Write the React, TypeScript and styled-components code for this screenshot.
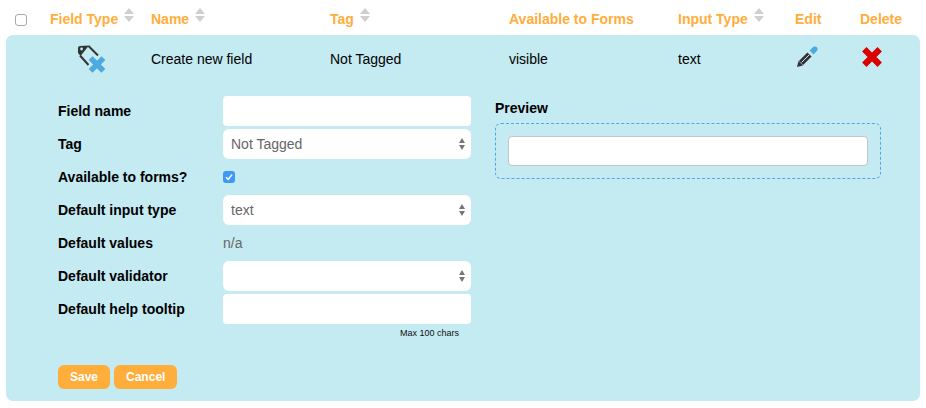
import { createGlobalStyle, styled } from "styled-components";

const GlobalStyle = createGlobalStyle`
  html, body {
    margin: 0;
    padding: 0;
    background: #fff;
  }
  body {
    font-family: "Liberation Sans", Arial, sans-serif;
    font-size: 14px;
    color: #000;
  }
`;

const COLUMNS = "44px 101px 179px 179px 169px 117px 65px 1fr";

const Page = styled.div`
  width: 926px;
  height: 408px;
  padding: 0 6px;
  box-sizing: border-box;
  overflow: hidden;
`;

const HeaderRow = styled.div`
  display: grid;
  grid-template-columns: ${COLUMNS};
  height: 35px;
  padding-top: 3px;
  box-sizing: border-box;
  align-items: center;
`;

const HeaderCell = styled.div`
  display: flex;
  align-items: center;
  gap: 6px;
  color: #ffad3b;
  font-weight: 700;
  font-size: 14px;
`;

const SortIcon = styled.svg`
  width: 10px;
  height: 14px;
  margin-top: -8px;
  fill: #cfcfcf;
`;

const Box = styled.div<{ $checked?: boolean }>`
  width: 12px;
  height: 12px;
  box-sizing: border-box;
  border-radius: 3px;
  display: flex;
  align-items: center;
  justify-content: center;
  background: ${(props) => (props.$checked ? "#3f97f8" : "#fff")};
  border: ${(props) => (props.$checked ? "none" : "1px solid #a9a9a9")};
`;

const HeaderBox = styled(Box)`
  margin: 2px 0 0 9px;
`;

const Panel = styled.section`
  height: 366px;
  background: #c4eaf2;
  border-radius: 7px;
`;

const FieldRow = styled.div`
  display: grid;
  grid-template-columns: ${COLUMNS};
  height: 46px;
  align-items: center;
  padding-top: 1px;
  box-sizing: border-box;
`;

const TagGraphic = styled.svg`
  width: 28px;
  height: 28px;
  margin: 0 0 0 28px;
  display: block;
`;

const CellIcon = styled.svg`
  width: 22px;
  height: 22px;
  display: block;
  margin: -4px 0 0 1px;
`;

const FormArea = styled.div`
  display: flex;
  gap: 24px;
  padding: 15px 0 0 52px;
`;

const FormColumn = styled.div`
  width: 413px;
`;

const FormRows = styled.div`
  display: flex;
  flex-direction: column;
  gap: 3px;
`;

const FormRow = styled.div`
  display: grid;
  grid-template-columns: 165px 248px;
  height: 30px;
  align-items: center;
`;

const Label = styled.label`
  font-weight: 700;
  font-size: 14px;
`;

const TextInput = styled.input`
  width: 100%;
  height: 30px;
  box-sizing: border-box;
  border: none;
  border-radius: 4px;
  background: #fff;
  padding: 0 8px;
  font: 14px "Liberation Sans", Arial, sans-serif;
`;

const SelectWrap = styled.div`
  position: relative;
  height: 30px;
`;

const Select = styled.select`
  width: 100%;
  height: 30px;
  box-sizing: border-box;
  appearance: none;
  border: none;
  border-radius: 6px;
  background: #fff;
  padding: 0 8px;
  color: #666;
  font: 14px "Liberation Sans", Arial, sans-serif;
`;

const SelectArrow = styled.svg`
  position: absolute;
  right: 6px;
  top: 9px;
  width: 6px;
  height: 12px;
  fill: #777;
  pointer-events: none;
`;

const Muted = styled.span`
  color: #666;
  font-size: 14px;
`;

const Hint = styled.div`
  width: 401px;
  margin-top: 4px;
  font-size: 9px;
  line-height: 11px;
  text-align: right;
  color: #111;
`;

const Actions = styled.div`
  display: flex;
  gap: 4px;
  margin-top: 26px;
`;

const Button = styled.button`
  height: 24px;
  padding: 0 12px;
  border: none;
  border-radius: 6px;
  background: #ffad3b;
  color: #fff;
  font: 700 12px "Liberation Sans", Arial, sans-serif;
`;

const PreviewColumn = styled.div`
  width: 386px;
  padding-top: 4px;
`;

const PreviewTitle = styled.div`
  font-weight: 700;
  font-size: 14px;
  line-height: 16px;
  margin-bottom: 7px;
`;

const PreviewBox = styled.div`
  padding: 12px;
  border: 1px dashed #4ea9e2;
  border-radius: 6px;
`;

const PreviewInput = styled(TextInput)`
  border: 1px solid #c4c4c4;
  display: block;
`;

function Sort() {
  return (
    <SortIcon viewBox="0 0 10 14">
      <path d="M5 0 L10 6 H0 Z M0 8 H10 L5 14 Z" />
    </SortIcon>
  );
}

function SelectField({ value }: { value: string }) {
  return (
    <SelectWrap>
      <Select defaultValue={value}>
        <option value={value}>{value}</option>
      </Select>
      <SelectArrow viewBox="0 0 6 12">
        <path d="M3 0 L6 5 H0 Z M0 7 H6 L3 12 Z" />
      </SelectArrow>
    </SelectWrap>
  );
}

export default function App() {
  return (
    <Page>
      <GlobalStyle />
      <HeaderRow>
        <HeaderBox />
        <HeaderCell>
          Field Type <Sort />
        </HeaderCell>
        <HeaderCell>
          Name <Sort />
        </HeaderCell>
        <HeaderCell>
          Tag <Sort />
        </HeaderCell>
        <HeaderCell>Available to Forms</HeaderCell>
        <HeaderCell>
          Input Type <Sort />
        </HeaderCell>
        <HeaderCell>Edit</HeaderCell>
        <HeaderCell>Delete</HeaderCell>
      </HeaderRow>
      <Panel>
        <FieldRow>
          <span />
          <TagGraphic viewBox="0 0 28 28">
            <path d="M0 3 Q0 1 2 1 L11 0.5 L2.5 11 L0 8 Z" fill="#333" />
            <circle cx="3.6" cy="4" r="1.4" fill="#c4eaf2" />
            <path
              d="M10.5 1 L20 10.5 M2 10.5 L10.5 20"
              stroke="#333"
              strokeWidth="2"
              fill="none"
            />
            <path
              d="M14.5 15 L23.5 24 M23.5 15 L14.5 24"
              stroke="#4ea9de"
              strokeWidth="5.4"
              strokeLinecap="square"
            />
          </TagGraphic>
          <span>Create new field</span>
          <span>Not Tagged</span>
          <span>visible</span>
          <span>text</span>
          <CellIcon viewBox="0 0 22 22">
            <path d="M1 21 L2.5 15 L7 19.5 Z" fill="#333" />
            <path
              d="M5 17 L13.5 8.5"
              stroke="#333"
              strokeWidth="6"
              fill="none"
            />
            <path
              d="M5.5 16.5 L13 9"
              stroke="#c4eaf2"
              strokeWidth="1"
              fill="none"
            />
            <path d="M13.6 4.4 L17.4 0.8 Q19.4 -0.2 21 1.2 Q22.2 3 21.2 4.6 L17.6 8.4 Z" fill="#4ea9de" />
          </CellIcon>
          <CellIcon viewBox="0 0 22 22">
            <path
              d="M5.5 5.5 L16.5 16.5 M16.5 5.5 L5.5 16.5"
              stroke="#d90000"
              strokeWidth="6.2"
              strokeLinecap="square"
            />
          </CellIcon>
        </FieldRow>
        <FormArea>
          <FormColumn>
            <FormRows>
              <FormRow>
                <Label>Field name</Label>
                <TextInput type="text" />
              </FormRow>
              <FormRow>
                <Label>Tag</Label>
                <SelectField value="Not Tagged" />
              </FormRow>
              <FormRow>
                <Label>Available to forms?</Label>
                <Box $checked>
                  <svg width="8" height="8" viewBox="0 0 8 8">
                    <path
                      d="M1 4.2 L3.2 6.4 L7 1.4"
                      stroke="#fff"
                      strokeWidth="1.6"
                      fill="none"
                    />
                  </svg>
                </Box>
              </FormRow>
              <FormRow>
                <Label>Default input type</Label>
                <SelectField value="text" />
              </FormRow>
              <FormRow>
                <Label>Default values</Label>
                <Muted>n/a</Muted>
              </FormRow>
              <FormRow>
                <Label>Default validator</Label>
                <SelectField value="" />
              </FormRow>
              <FormRow>
                <Label>Default help tooltip</Label>
                <TextInput type="text" />
              </FormRow>
            </FormRows>
            <Hint>Max 100 chars</Hint>
            <Actions>
              <Button>Save</Button>
              <Button>Cancel</Button>
            </Actions>
          </FormColumn>
          <PreviewColumn>
            <PreviewTitle>Preview</PreviewTitle>
            <PreviewBox>
              <PreviewInput type="text" />
            </PreviewBox>
          </PreviewColumn>
        </FormArea>
      </Panel>
    </Page>
  );
}
